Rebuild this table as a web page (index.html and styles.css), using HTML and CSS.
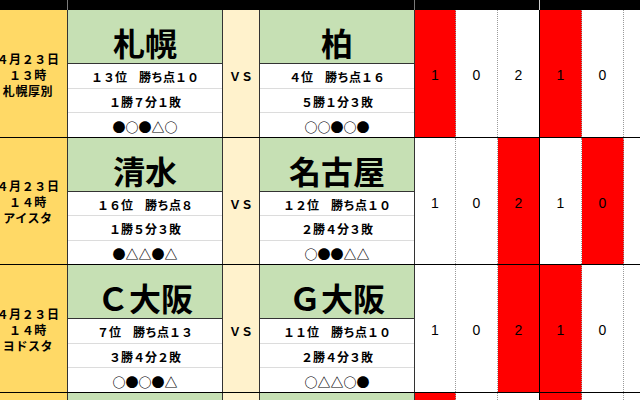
FILE: index.html
```html
<!DOCTYPE html>
<html lang="ja">
<head>
<meta charset="utf-8">
<title>対戦表</title>
<link rel="stylesheet" href="styles.css">
</head>
<body>
<div class="sheet">
  <div class="hdr">
    <div class="h h-date"></div>
    <div class="h h-teams"></div>
    <div class="h h-g1"></div>
    <div class="h h-g2"></div>
  </div>

  <div class="block b1">
    <div class="date"><span>４月２３日</span><span>１３時</span><span>札幌厚別</span></div>
    <div class="team">
      <div class="name">札幌</div>
      <div class="row">１３位　勝ち点１０</div>
      <div class="row">１勝７分１敗</div>
      <div class="row marks">●○●△○</div>
    </div>
    <div class="vs">ＶＳ</div>
    <div class="team">
      <div class="name">柏</div>
      <div class="row">４位　勝ち点１６</div>
      <div class="row">５勝１分３敗</div>
      <div class="row marks">○○●○●</div>
    </div>
    <div class="sc dot red">1</div>
    <div class="sc dot">0</div>
    <div class="sc solid">2</div>
    <div class="sc dot red">1</div>
    <div class="sc dot">0</div>
    <div class="sc"></div>
  </div>

  <div class="block b2">
    <div class="date"><span>４月２３日</span><span>１４時</span><span>アイスタ</span></div>
    <div class="team">
      <div class="name">清水</div>
      <div class="row">１６位　勝ち点８</div>
      <div class="row">１勝５分３敗</div>
      <div class="row marks">●△△●△</div>
    </div>
    <div class="vs">ＶＳ</div>
    <div class="team">
      <div class="name">名古屋</div>
      <div class="row">１２位　勝ち点１０</div>
      <div class="row">２勝４分３敗</div>
      <div class="row marks">○●●△△</div>
    </div>
    <div class="sc dot">1</div>
    <div class="sc dot">0</div>
    <div class="sc solid red">2</div>
    <div class="sc dot">1</div>
    <div class="sc dot red">0</div>
    <div class="sc"></div>
  </div>

  <div class="block b3">
    <div class="date"><span>４月２３日</span><span>１４時</span><span>ヨドスタ</span></div>
    <div class="team">
      <div class="name">Ｃ大阪</div>
      <div class="row">７位　勝ち点１３</div>
      <div class="row">３勝４分２敗</div>
      <div class="row marks">○●○●△</div>
    </div>
    <div class="vs">ＶＳ</div>
    <div class="team">
      <div class="name">Ｇ大阪</div>
      <div class="row">１１位　勝ち点１０</div>
      <div class="row">２勝４分３敗</div>
      <div class="row marks">○△△○●</div>
    </div>
    <div class="sc dot">1</div>
    <div class="sc dot">0</div>
    <div class="sc solid red">2</div>
    <div class="sc dot red">1</div>
    <div class="sc dot">0</div>
    <div class="sc"></div>
  </div>

  <div class="block b4">
    <div class="date"></div>
    <div class="team"><div class="name"></div></div>
    <div class="vs"></div>
    <div class="team"><div class="name"></div></div>
    <div class="sc dot red"></div>
    <div class="sc dot"></div>
    <div class="sc solid"></div>
    <div class="sc dot red"></div>
    <div class="sc dot"></div>
    <div class="sc"></div>
  </div>
</div>
</body>
</html>
```

FILE: styles.css
```css
html, body {
  margin: 0;
  padding: 0;
  background: #ffffff;
  overflow: hidden;
}
body {
  width: 640px;
  height: 400px;
  font-family: "Noto Sans CJK JP", "Noto Sans", sans-serif;
  color: #000;
}
.sheet {
  margin-left: -11px;
  width: 677px;
  height: 400px;
  overflow: hidden;
}
.hdr {
  display: grid;
  grid-template-columns: 79px 347px 125px 126px;
  height: 10px;
  background: #000;
}
.h {
  box-sizing: border-box;
  border-right: 1px solid #7a7a7a;
}
.h-g1 {
  border-right-color: #d0d0d0;
}
.block {
  display: grid;
  grid-template-columns: 79px 155px 37px 155px 41px 42px 42px 42px 42px 42px;
  box-sizing: border-box;
  border-bottom: 1px solid #000;
}
.b1 { height: 128px; }
.b2 { height: 127px; }
.b3 { height: 128px; }
.b4 { height: 7px; border-bottom: none; }
.date {
  box-sizing: border-box;
  background: #ffd966;
  border-right: 1px solid #333;
  display: flex;
  flex-direction: column;
  justify-content: center;
  align-items: center;
  font-size: 12px;
  font-weight: bold;
  letter-spacing: 0.6px;
  line-height: 16px;
  padding-top: 2px;
  white-space: nowrap;
}
.team {
  box-sizing: border-box;
  border-right: 1px solid #333;
  display: flex;
  flex-direction: column;
  background: #fff;
}
.name {
  box-sizing: border-box;
  height: 54px;
  flex: none;
  background: #c6e0b4;
  border-bottom: 1px solid #333;
  display: flex;
  align-items: flex-end;
  justify-content: center;
  font-size: 32px;
  font-weight: bold;
  line-height: 32px;
  padding-bottom: 5px;
}
.b4 .name {
  border-bottom: none;
  height: 7px;
  padding: 0;
}
.row {
  flex: 1;
  box-sizing: border-box;
  border-bottom: 1px solid #dcdcdc;
  display: flex;
  align-items: center;
  justify-content: center;
  font-size: 12px;
  font-weight: bold;
  line-height: 1;
  padding-top: 2px;
  white-space: nowrap;
}
.row.marks {
  font-size: 13px;
}
.row:last-child {
  border-bottom: none;
}
.vs {
  box-sizing: border-box;
  background: #fff2cc;
  border-right: 1px solid #333;
  display: flex;
  align-items: center;
  justify-content: center;
  font-size: 12px;
  font-weight: bold;
  padding-top: 4px;
}
.sc {
  box-sizing: border-box;
  display: flex;
  align-items: center;
  justify-content: center;
  font-family: "Liberation Sans", Arial, sans-serif;
  font-size: 14px;
  padding-top: 3px;
  background: #fff;
}
.sc.dot {
  border-right: 1px dotted #9a9a9a;
}
.sc.solid {
  border-right: 1px solid #000;
}
.sc.red {
  background: #ff0000;
}
```
